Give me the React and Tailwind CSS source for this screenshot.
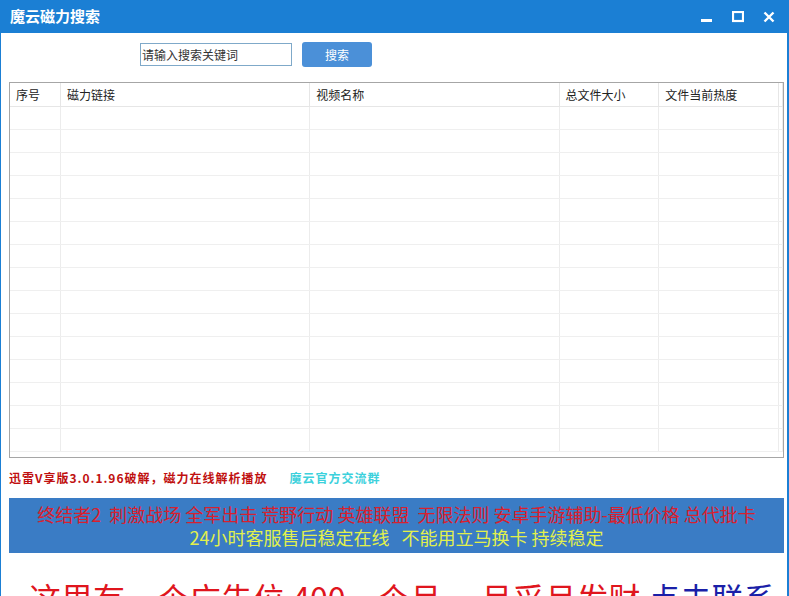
const columns = [
  { title: "序号", w: "w-[51px]" },
  { title: "磁力链接", w: "w-[250px]" },
  { title: "视频名称", w: "w-[250px]" },
  { title: "总文件大小", w: "w-[100px]" },
  { title: "文件当前热度", w: "w-[120px]" },
];

const rows = Array.from({ length: 15 }, (_, i) => i);

const App = () => {
  return (
    <div className="w-[789px] h-[596px] overflow-hidden flex flex-col bg-[#1b7fd4] border-l border-r-2 border-[#1b7fd4] font-['Noto_Sans_CJK_SC',sans-serif]">
      {/* title bar */}
      <div className="h-[33px] shrink-0 flex items-center justify-between pl-[9px] pr-[12px]">
        <span className="text-white text-[15px] font-bold">魔云磁力搜索</span>
        <div className="flex items-center gap-[19px] pt-[1px]">
          <svg width="12" height="12" viewBox="0 0 12 12">
            <rect x="0" y="8" width="11" height="3" fill="white" />
          </svg>
          <svg width="12" height="12" viewBox="0 0 12 12">
            <rect x="1" y="1" width="10" height="9" fill="none" stroke="white" strokeWidth="2.2" />
          </svg>
          <svg width="12" height="12" viewBox="0 0 12 12">
            <path d="M1.5 1.5 L10.5 10.5 M10.5 1.5 L1.5 10.5" stroke="white" strokeWidth="2.4" />
          </svg>
        </div>
      </div>

      {/* body */}
      <div className="flex-1 bg-white flex flex-col">
        {/* search */}
        <div className="flex items-center pt-[9px] pl-[139px] gap-[10px]">
          <div className="w-[152px] h-[23px] border border-[#7fa9c9] flex items-center pl-[1px] text-[12px] text-[#333]">
            请输入搜索关键词
          </div>
          <button className="w-[70px] h-[25px] rounded-[3px] bg-[#4b90d8] text-white text-[12px]">搜索</button>
        </div>

        {/* table */}
        <div className="ml-[8px] mr-[3px] mt-[15px] h-[376px] border border-[#a6a6a6] flex flex-col">
          <div className="flex h-[24px] border-b border-[#e6e6e6] text-[12px] text-[#222]">
            {columns.map((c) => (
              <div key={c.title} className={`${c.w} border-r border-[#e6e6e6] flex items-center pl-[6px]`}>
                {c.title}
              </div>
            ))}
            <div className="w-[4px] border-r border-[#e6e6e6]" />
          </div>
          {rows.map((r) => (
            <div key={r} className="flex h-[23px] border-b border-[#efefef]">
              {columns.map((c) => (
                <div key={c.title} className={`${c.w} border-r border-[#ececec]`} />
              ))}
              <div className="w-[4px] border-r border-[#ececec]" />
            </div>
          ))}
        </div>

        {/* links */}
        <div className="flex items-center h-[20px] mt-[10px] pl-[8px] text-[12px] font-bold tracking-[1px]">
          <span className="text-[#c01010]">迅雷V享版3.0.1.96破解，磁力在线解析播放</span>
          <span className="ml-[22px] text-[#3dd1dc]">魔云官方交流群</span>
        </div>

        {/* banner */}
        <div className="ml-[8px] mr-[3px] mt-[10px] h-[55px] bg-[#3a7cc5] flex flex-col items-center justify-center text-[18px] leading-[23px]">
          <span className="text-[#d8202e] whitespace-pre">终结者2  刺激战场 全军出击 荒野行动 英雄联盟  无限法则 安卓手游辅助-最低价格 总代批卡</span>
          <span className="text-[#e2f04c] whitespace-pre">24小时客服售后稳定在线   不能用立马换卡 持续稳定</span>
        </div>

        {/* ad */}
        <div className="mt-[24px] pl-[28px] text-[32px] leading-[40px] whitespace-pre">
          <span className="text-[#e0151d]">这里有一个广告位 400一个月 一月采月发财 </span>
          <span className="text-[#1a1fa8]">点击联系</span>
        </div>
      </div>
    </div>
  );
};

export default App;
